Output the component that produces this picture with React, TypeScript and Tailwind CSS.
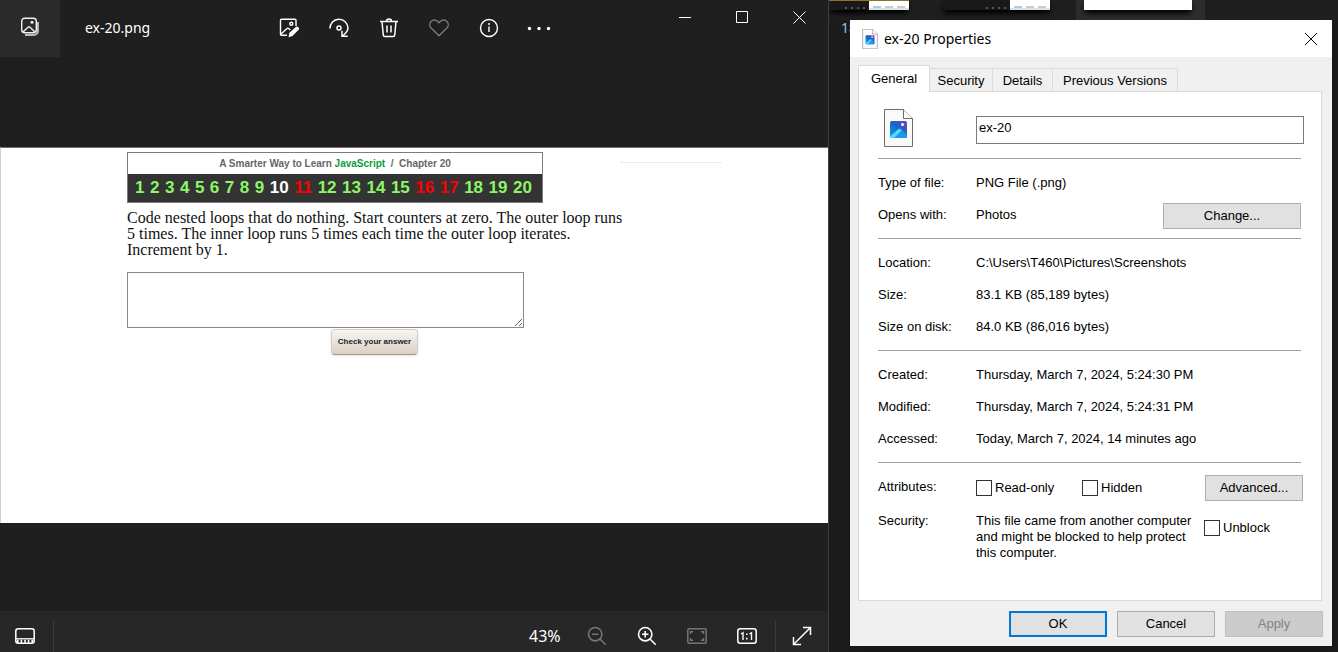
import type { ReactNode } from "react";

const uiFont = "font-['Noto_Sans','Open_Sans',sans-serif]";
const dialogFont = "font-['Liberation_Sans',Arial,sans-serif]";

function GalleryIcon() {
  return (
    <svg width="20" height="20" viewBox="0 0 20 20" fill="none" stroke="#f2f2f2" strokeWidth="1.4">
      <path d="M17.800 5v9a4 4 0 0 1-4 4H5" stroke="#bdbdbd" strokeWidth="2.200" />
      <rect x="1.700" y="1.200" width="14.600" height="14.600" rx="3" />
      <path d="M3 15l5-4.700q1-.9 2 0l5 4.700" />
      <circle cx="12" cy="5.300" r="1.500" fill="#f2f2f2" stroke="none" />
    </svg>
  );
}

function EditImageIcon() {
  return (
    <svg width="20" height="20" viewBox="0 0 20 20" fill="none" stroke="#fff" strokeWidth="1.4">
      <path d="M8 17.300H2.500a1 1 0 0 1-1-1V2.300a1 1 0 0 1 1-1h13.500a1 1 0 0 1 1 1V8" />
      <path d="M2 16l6-5.500q1-.8 2 .2l1.200 1.300" />
      <circle cx="12.300" cy="5.800" r="1.500" />
      <path d="M9.500 19.200l.9-4.400 6.100-5.600a2 2 0 0 1 2.900 2.900l-5.900 6z" fill="#fff" stroke="none" />
    </svg>
  );
}

function RotateIcon() {
  return (
    <svg width="20" height="20" viewBox="0 0 20 20" fill="none" stroke="#fff" strokeWidth="1.5">
      <path d="M1 10.500a9 9 0 0 1 18-.5c0 3.200-2.200 5.300-5.500 8.200" />
      <path d="M13 12.700v5.600h5.700" />
      <circle cx="10" cy="10" r="2" />
    </svg>
  );
}

function TrashIcon() {
  return (
    <svg width="20" height="20" viewBox="0 0 20 20" fill="none" stroke="#fff" strokeWidth="1.5">
      <path d="M1 3.500h18M7.500 3.200a2.500 2.300 0 0 1 5 0M3 3.500l1.300 13.700a1.500 1.500 0 0 0 1.500 1.300h8.400a1.500 1.500 0 0 0 1.500-1.300L17 3.500M8 7.500v7M12 7.500v7" />
    </svg>
  );
}

function HeartIcon() {
  return (
    <svg width="20" height="20" viewBox="0 0 20 20" fill="none" stroke="#7a7a7a" strokeWidth="1.4" strokeLinejoin="round">
      <path d="M10 17.800L2.100 9.900a4.600 4.600 0 0 1 0-6.500 4.600 4.600 0 0 1 6.600 0L10 4.700l1.300-1.300a4.600 4.600 0 0 1 6.600 0 4.600 4.600 0 0 1 0 6.500z" />
    </svg>
  );
}

function InfoIcon() {
  return (
    <svg width="20" height="20" viewBox="0 0 20 20" fill="none" stroke="#fff" strokeWidth="1.4">
      <circle cx="10" cy="10" r="8.500" />
      <path d="M10 8.500v5.500" />
      <circle cx="10" cy="6" r="1" fill="#fff" stroke="none" />
    </svg>
  );
}

function DotsIcon() {
  return (
    <svg width="24" height="20" viewBox="0 0 24 20" fill="#fff">
      <circle cx="2.500" cy="10.500" r="1.700" />
      <circle cx="12" cy="10.500" r="1.700" />
      <circle cx="21.500" cy="10.500" r="1.700" />
    </svg>
  );
}

function FilmstripIcon() {
  return (
    <svg width="20" height="16" viewBox="0 0 20 16" fill="none" stroke="#fff" strokeWidth="1.5">
      <rect x="0.800" y="0.800" width="18.400" height="14.400" rx="2.500" />
      <path d="M1 10.800h18" strokeWidth="1.300" />
      <path d="M2 13.300h16" strokeWidth="3" strokeDasharray="1.600 2" />
    </svg>
  );
}

function ZoomIcon({ plus = false }: { plus?: boolean }) {
  return (
    <svg width="20" height="20" viewBox="0 0 20 20" fill="none" stroke={plus ? "#fff" : "#757575"} strokeWidth="1.6">
      <circle cx="8.200" cy="8.200" r="6.700" />
      <path d="M13 13l5.700 5.700M5 8.200h6.400" />
      {plus && <path d="M8.200 5v6.400" />}
    </svg>
  );
}

function FitIcon() {
  return (
    <svg width="20" height="16" viewBox="0 0 20 16" fill="none" stroke="#757575" strokeWidth="1.5">
      <rect x="0.800" y="0.800" width="18.400" height="14.400" rx="1.500" />
      <path d="M3.500 6V3.700H6M14 3.700h2.500V6M16.500 10v2.300H14M6 12.300H3.500V10" />
    </svg>
  );
}

function ActualSizeIcon() {
  return (
    <svg width="20" height="16" viewBox="0 0 20 16" fill="none" stroke="#fff" strokeWidth="1.5">
      <rect x="0.800" y="0.800" width="18.400" height="14.400" rx="2.500" />
      <path d="M4 6l2-1.300V12M12.500 6l2-1.300V12" strokeWidth="1.400" />
      <path d="M9 5.500h1.600v1.600H9zM9 9.800h1.600v1.600H9z" fill="#fff" stroke="none" />
    </svg>
  );
}

function ExpandIcon() {
  return (
    <svg width="20" height="20" viewBox="0 0 20 20" fill="none" stroke="#fff" strokeWidth="1.5">
      <path d="M1.500 18.500l17-17M11 1.500h7.500V9M1.500 11v7.500H9" />
    </svg>
  );
}

function FileIcon({ className, id, line }: { className: string; id: string; line: string }) {
  return (
    <svg className={className} viewBox="0 0 29 38">
      <defs>
        <linearGradient id={id} x1="0" y1="1" x2="1" y2="0">
          <stop offset="0" stopColor="#0aa5ee" />
          <stop offset="0.550" stopColor="#1b62c9" />
          <stop offset="1" stopColor="#7a45b0" />
        </linearGradient>
      </defs>
      <path d="M.5.500h19l9 9v28H.5z" fill="#fafafa" stroke={line} />
      <path d="M19.500.500v9h9" fill="#fff" stroke={line} />
      <rect x="6" y="12" width="17" height="17" rx="1.500" fill={`url(#${id})`} />
      <path d="M7 28.500l8-8.500q1.200-1 2.200 0L23 25.800V27.500q0 1.500-1.500 1.500H7.500z" fill="#1899ea" />
      <path d="M6 27.500l9-8 2.500 2-7.500 7.500H7.500Q6 29 6 27.500z" fill="#55d8fb" />
      <circle cx="18.500" cy="15.500" r="1.500" fill="#fff" />
    </svg>
  );
}

function IconButton({ label, className = "w-[50px]", children }: { label: string; className?: string; children: ReactNode }) {
  return (
    <button type="button" aria-label={label} className={`flex h-full shrink-0 items-center justify-center ${className}`}>
      {children}
    </button>
  );
}

const chapters = Array.from({ length: 20 }, (_, i) => i + 1);
const chapterColor = (n: number) =>
  n === 10 ? "text-white" : [11, 16, 17].includes(n) ? "text-[#fa0000]" : "text-[#8cf766]";

function ExercisePage() {
  return (
    <section className="h-[376px] w-full border-t border-l border-t-[#6e6e6e] border-l-[#d0d0d0] bg-white pt-1 pr-2 pl-[126px]">
      <div className="flex items-start gap-[78px]">
        <header className="w-[416px] border border-[#7c7c7c] font-['Liberation_Sans',Arial,sans-serif] font-bold">
          <h1 className="h-[21px] text-center text-[10px] leading-[21px] whitespace-pre text-[#666]">
            A Smarter Way to Learn <span className="text-[#0a9c3c]">JavaScript</span>
            {"  /  Chapter 20"}
          </h1>
          <nav className="flex h-7 items-center justify-between bg-[#333] pr-2.5 pl-[7px] text-[17px]">
            {chapters.map((n) => (
              <a key={n} href={`#chapter-${n}`} className={chapterColor(n)}>
                {n}
              </a>
            ))}
          </nav>
        </header>
        <div className="mt-2.5 w-[100px] border-t border-dotted border-[#ddd]" />
      </div>
      <p className="mt-[7px] font-['Liberation_Serif',Georgia,serif] text-base leading-4 text-[#111]">
        Code nested loops that do nothing. Start counters at zero. The outer loop runs
        <br />
        5 times. The inner loop runs 5 times each time the outer loop iterates.
        <br />
        Increment by 1.
      </p>
      <div className="mt-[14px] flex w-[397px] flex-col">
        <textarea aria-label="Your answer" className="h-14 w-full resize-y border border-[#8a8a8a] bg-white" />
        <button
          type="button"
          className="mt-px ml-[204px] h-[26px] w-[87px] rounded-sm border border-[#d5cdc4] border-b-[#a59a8d] bg-linear-to-b from-[#f8f6f4] to-[#d9cfc4] font-['Liberation_Sans',Arial,sans-serif] text-[8px] font-bold whitespace-nowrap text-[#222] shadow-sm"
        >
          Check your answer
        </button>
      </div>
    </section>
  );
}

function PhotoViewer() {
  return (
    <main className={`flex min-h-screen min-w-0 flex-1 flex-col border-r border-[#3c3c3c] bg-[#1f1f1f] text-white ${uiFont}`}>
      <header className="flex h-[57px] items-center">
        <button type="button" aria-label="Gallery" className="flex h-full w-[60px] items-center justify-center bg-[#2b2b2b] pb-1">
          <GalleryIcon />
        </button>
        <h2 className="w-[204px] pb-0.5 pl-[25px] text-sm">ex-20.png</h2>
        <div className="flex h-full pb-0.5">
          <IconButton label="Edit image"><EditImageIcon /></IconButton>
          <IconButton label="Rotate"><RotateIcon /></IconButton>
          <IconButton label="Delete"><TrashIcon /></IconButton>
          <IconButton label="Add to favorites"><HeartIcon /></IconButton>
          <IconButton label="File info"><InfoIcon /></IconButton>
          <IconButton label="See more"><DotsIcon /></IconButton>
        </div>
        <div className="ml-auto flex h-[34px] self-start">
          <IconButton label="Minimize" className="w-[57px]">
            <svg width="13" height="13" stroke="#fff"><path d="M0 6.500h12" /></svg>
          </IconButton>
          <IconButton label="Maximize" className="w-[57px]">
            <svg width="13" height="13" fill="none" stroke="#fff"><path d="M.5.500h11v11H.5z" /></svg>
          </IconButton>
          <IconButton label="Close" className="w-[57px]">
            <svg width="13" height="13" stroke="#fff"><path d="M.5.500l12 12M12.500.500l-12 12" /></svg>
          </IconButton>
        </div>
      </header>
      <div className="flex flex-1 items-center pt-0.5">
        <ExercisePage />
      </div>
      <footer className="flex h-[41px] bg-[#272727] pt-2.5">
        <IconButton label="Filmstrip" className="w-[54px] border-r border-[#3a3a3a] pr-1 pb-0.5"><FilmstripIcon /></IconButton>
        <div className="ml-auto flex items-center">
          <span className="w-[43px] pb-0.5 text-base">43%</span>
          <IconButton label="Zoom out" className="w-[50px] pb-0.5"><ZoomIcon /></IconButton>
          <IconButton label="Zoom in" className="w-[50px] pb-0.5"><ZoomIcon plus /></IconButton>
          <IconButton label="Fit to window" className="w-[50px] pb-0.5"><FitIcon /></IconButton>
          <IconButton label="Actual size" className="w-[50px] pb-0.5"><ActualSizeIcon /></IconButton>
          <IconButton label="Full screen" className="ml-[3px] w-[53px] border-l border-[#3a3a3a] pb-0.5"><ExpandIcon /></IconButton>
        </div>
      </footer>
    </main>
  );
}

function Thumbnail({ className, dark = true }: { className: string; dark?: boolean }) {
  return (
    <div className={`flex h-2.5 shadow-md shadow-black ${className}`}>
      {dark && (
        <div className="flex flex-1 items-end justify-end gap-1 bg-[#191919] pr-1 pb-px">
          <i className="size-0.5 bg-[#555]" />
          <i className="size-0.5 bg-[#555]" />
          <i className="size-0.5 bg-[#555]" />
          <i className="size-0.5 bg-[#555]" />
        </div>
      )}
      <div className={`flex items-end justify-center gap-1 bg-white ${dark ? "w-10 border-b-2 border-[#e2e2e2]" : "flex-1"}`}>
        {dark && (
          <>
            <i className="h-0.5 w-2 bg-[#a9cce8]" />
            <i className="h-0.5 w-2 bg-[#ccc]" />
            <i className="h-0.5 w-2 bg-[#ccc]" />
          </>
        )}
      </div>
    </div>
  );
}

const buttonBase = "h-[26px] text-[13px]";

function Check({ label }: { label: string }) {
  return (
    <label className="flex items-center gap-[3px]">
      <input type="checkbox" className="size-4 appearance-none border border-[#333] bg-white" />
      {label}
    </label>
  );
}

function Row({ label, children }: { label: string; children: ReactNode }) {
  return (
    <div className="flex h-8 items-center">
      <dt className="w-[98px] shrink-0">{label}</dt>
      <dd className="flex flex-1 items-center justify-between">{children}</dd>
    </div>
  );
}

function PropertiesDialog() {
  const tab = "h-6 border border-l-0 border-[#dadada] bg-[#f0f0f0] pt-0.5";
  return (
    <section role="dialog" aria-label="ex-20 Properties" className={`relative bg-[#f0f0f0] pb-[9px] text-[13px] leading-4 text-black shadow-lg ${dialogFont}`}>
      <header className="flex h-[37px] items-center bg-white pr-[14px] pl-3">
        <FileIcon className="h-5 w-4" id="small-file" line="#777" />
        <h2 className={`ml-1.5 text-sm ${uiFont}`}>ex-20 Properties</h2>
        <button type="button" aria-label="Close" className="ml-auto">
          <svg width="14" height="14" stroke="#000"><path d="M1 1l12 12M13 1L1 13" /></svg>
        </button>
      </header>
      <div className="px-2 pt-2">
        <div role="tablist" className="-mb-px flex items-end pr-2">
          <button type="button" role="tab" aria-selected="true" className="relative h-[27px] w-[72px] border border-b-0 border-[#dadada] bg-white">General</button>
          <button type="button" role="tab" className={`${tab} w-[63px]`}>Security</button>
          <button type="button" role="tab" className={`${tab} w-[60px]`}>Details</button>
          <button type="button" role="tab" className={`${tab} w-[125px]`}>Previous Versions</button>
        </div>
        <div role="tabpanel" className="mr-0.5 h-[510px] border border-[#dadada] bg-white pr-[17px] pl-[19px]">
          <div className="flex h-[66px] items-start pt-[17px]">
            <FileIcon className="ml-1.5 h-[38px] w-[29px]" id="large-file" line="#6b6b6b" />
            <input aria-label="File name" defaultValue="ex-20" className="mt-[7px] ml-[63px] h-7 min-w-0 flex-1 border border-[#7a7a7a] bg-white px-0.5 pb-1.5" />
          </div>
          <dl className="mr-[3px]">
            <div className="border-t border-[#a0a0a0] pt-2 pb-[7px]">
              <Row label="Type of file:">PNG File (.png)</Row>
              <Row label="Opens with:">
                Photos
                <button type="button" className={`${buttonBase} mt-0.5 w-[138px] border border-[#adadad] bg-[#e1e1e1]`}>Change...</button>
              </Row>
            </div>
            <div className="border-t border-[#a0a0a0] pt-2 pb-[7px]">
              <Row label="Location:">C:\Users\T460\Pictures\Screenshots</Row>
              <Row label="Size:">83.1 KB (85,189 bytes)</Row>
              <Row label="Size on disk:">84.0 KB (86,016 bytes)</Row>
            </div>
            <div className="border-t border-[#a0a0a0] pt-2 pb-[7px]">
              <Row label="Created:">Thursday, March 7, 2024, 5:24:30 PM</Row>
              <Row label="Modified:">Thursday, March 7, 2024, 5:24:31 PM</Row>
              <Row label="Accessed:">Today, March 7, 2024, 14 minutes ago</Row>
            </div>
            <div className="border-t border-[#a0a0a0]" />
          </dl>
          <div className="flex pt-3">
            <span className="w-[98px] pt-1">Attributes:</span>
            <div className="flex flex-1 items-center pr-px">
              <div className="w-[106px]"><Check label="Read-only" /></div>
              <Check label="Hidden" />
              <button type="button" className={`${buttonBase} ml-auto w-[98px] border border-[#adadad] bg-[#e1e1e1]`}>Advanced...</button>
            </div>
          </div>
          <div className="flex pt-3">
            <span className="w-[98px] shrink-0">Security:</span>
            <p className="w-[228px] shrink-0">
              This file came from another computer
              <br />
              and might be blocked to help protect
              <br />
              this computer.
            </p>
            <div className="pt-[7px]"><Check label="Unblock" /></div>
          </div>
        </div>
      </div>
      <footer className="mt-2.5 flex justify-end gap-2.5 pr-[9px]">
        <button type="button" className={`${buttonBase} w-[98px] border-2 border-[#0078d7] bg-[#e1e1e1]`}>OK</button>
        <button type="button" className={`${buttonBase} w-[98px] border border-[#adadad] bg-[#e1e1e1]`}>Cancel</button>
        <button type="button" disabled className={`${buttonBase} w-[98px] border border-[#bfbfbf] bg-[#ccc] text-[#838383]`}>Apply</button>
      </footer>
    </section>
  );
}

export default function App() {
  return (
    <div className="flex min-h-screen overflow-hidden bg-[#1b1b1b]">
      <PhotoViewer />
      <aside className="relative w-[509px] shrink-0 pt-5 pr-1.5 pl-[21px]">
        <div className="absolute inset-x-0 top-0 flex h-5 items-start overflow-hidden bg-[#1f1f1f]">
          <Thumbnail className="w-20 border-t border-[#8a7430]" />
          <Thumbnail className="ml-[34px] w-[107px]" />
          <div className="ml-[26px] h-5 w-[129px] bg-[#2d2d2d] px-2">
            <Thumbnail className="w-[108px]" dark={false} />
          </div>
        </div>
        <span className={`absolute top-[18px] left-3 text-sm text-[#8cc4f0] ${uiFont}`}>18</span>
        <PropertiesDialog />
      </aside>
    </div>
  );
}
